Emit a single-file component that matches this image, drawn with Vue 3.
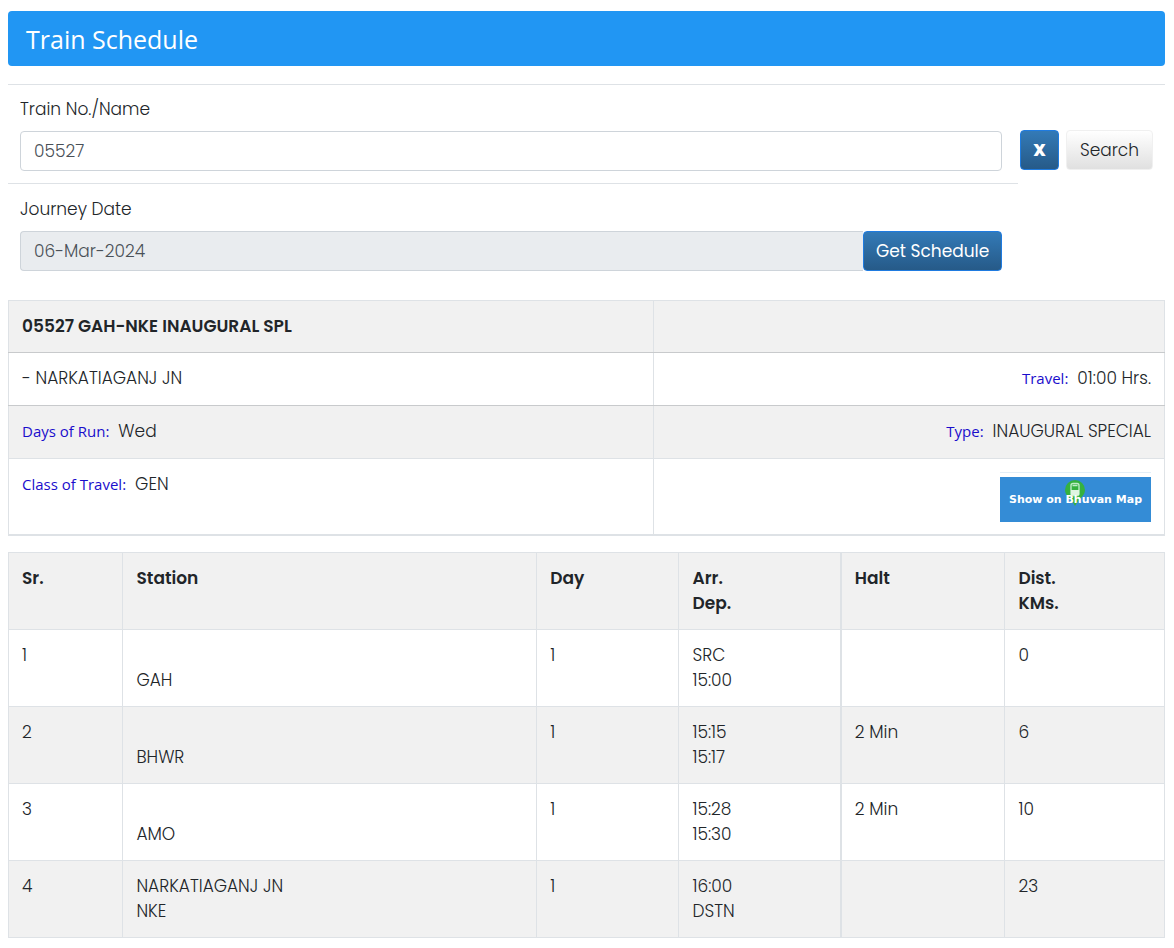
<script setup>
import { ref } from 'vue'

const trainNo = ref('05527')
const journeyDate = ref('06-Mar-2024')

const stops = [
  { sr: 1, name: '', code: 'GAH', day: 1, arr: 'SRC', dep: '15:00', halt: '', dist: 0 },
  { sr: 2, name: '', code: 'BHWR', day: 1, arr: '15:15', dep: '15:17', halt: '2 Min', dist: 6 },
  { sr: 3, name: '', code: 'AMO', day: 1, arr: '15:28', dep: '15:30', halt: '2 Min', dist: 10 },
  { sr: 4, name: 'NARKATIAGANJ JN', code: 'NKE', day: 1, arr: '16:00', dep: 'DSTN', halt: '', dist: 23 }
]
</script>

<template>
  <main class="page">
    <h1 class="banner">Train Schedule</h1>

    <form class="search" @submit.prevent>
      <div class="field">
        <label for="train">Train No./Name</label>
        <input id="train" v-model="trainNo" class="control" type="text" />
      </div>
      <div class="actions">
        <button type="button" class="btn primary clear" @click="trainNo = ''">X</button>
        <button type="button" class="btn plain">Search</button>
      </div>
      <div class="field journey">
        <label for="date">Journey Date</label>
        <div class="group">
          <input id="date" v-model="journeyDate" class="control" type="text" readonly />
          <button type="submit" class="btn primary">Get Schedule</button>
        </div>
      </div>
    </form>

    <table class="grid summary">
      <colgroup>
        <col class="s-left" />
        <col />
      </colgroup>
      <tbody>
        <tr class="head">
          <th>05527 GAH-NKE INAUGURAL SPL</th>
          <td></td>
        </tr>
        <tr class="route">
          <td>- NARKATIAGANJ JN</td>
          <td><span class="key">Travel:</span>01:00 Hrs.</td>
        </tr>
        <tr>
          <td><span class="key">Days of Run:</span>Wed</td>
          <td><span class="key">Type:</span>INAUGURAL SPECIAL</td>
        </tr>
        <tr class="last">
          <td><span class="key">Class of Travel:</span>GEN</td>
          <td>
            <button type="button" class="map">
              <svg class="pin" viewBox="0 0 22 28" width="22" height="28" aria-hidden="true">
                <path d="M11 1a10 10 0 0 1 10 10c0 6-6 8-10 16C7 19 1 17 1 11A10 10 0 0 1 11 1z" fill="#35b13f" />
                <rect x="7" y="4.500" width="8" height="12" rx="2" fill="none" stroke="#bdebc5" stroke-width="1.400" />
                <path d="M7 11h8v5H7z" fill="#dff5e2" />
                <path d="M8.500 6.500h5M8 18l-1 2M14 18l1 2" stroke="#bdebc5" stroke-width="1.300" />
              </svg>
              <span>Show on Bhuvan Map</span>
            </button>
          </td>
        </tr>
      </tbody>
    </table>

    <table class="grid stops">
      <colgroup>
        <col class="c-sr" />
        <col class="c-station" />
        <col class="c-day" />
        <col class="c-time" />
        <col class="c-halt" />
        <col />
      </colgroup>
      <thead>
        <tr>
          <th>Sr.</th>
          <th>Station</th>
          <th>Day</th>
          <th>Arr.<br />Dep.</th>
          <th>Halt</th>
          <th>Dist.<br />KMs.</th>
        </tr>
      </thead>
      <tbody>
        <tr v-for="s in stops" :key="s.sr">
          <td>{{ s.sr }}</td>
          <td>{{ s.name }}<br />{{ s.code }}</td>
          <td>{{ s.day }}</td>
          <td>{{ s.arr }}<br />{{ s.dep }}</td>
          <td>{{ s.halt }}</td>
          <td>{{ s.dist }}</td>
        </tr>
      </tbody>
    </table>
  </main>
</template>

<style>
body {
  background: #fff;
}
</style>

<style scoped>
* {
  box-sizing: border-box;
}
.page {
  padding: 11px 9px 11px 8px;
  font: 300 17px/25px Poppins, Inter, sans-serif;
  color: #212529;
}
.banner {
  margin: 0 0 18px;
  padding: 11px 18px 10px;
  border-radius: 4px;
  background: #2196f3;
  color: #fff;
  font: 400 25px/34px "Segoe UI", "Open Sans", sans-serif;
}
.search {
  display: grid;
  grid-template-columns: minmax(0, 1fr) auto;
  border-top: 1px solid #dee2e6;
  margin-bottom: 17px;
}
.field {
  padding: 12px 16px 12px 12px;
}
.journey {
  padding-top: 13px;
  border-top: 1px solid #dee2e6;
}
.field label {
  display: block;
  margin-bottom: 9px;
}
.control {
  display: block;
  width: 100%;
  height: 40px;
  padding: 0 13px;
  border: 1px solid #ced4da;
  border-radius: 4px;
  background: #fff;
  color: #495057;
  font: inherit;
}
.control[readonly] {
  background: #e9ecef;
}
.group {
  display: flex;
}
.group .control {
  flex: 1;
  min-width: 0;
  border-radius: 4px 0 0 4px;
  border-right: 0;
}
.actions {
  display: flex;
  align-items: flex-start;
  gap: 7px;
  padding: 45px 12px 0 2px;
}
.btn {
  height: 40px;
  padding: 0 12px;
  border-radius: 4px;
  font: 400 17px/24px Poppins, Inter, sans-serif;
  white-space: nowrap;
}
.primary {
  border: 1px solid #1f7be0;
  background: linear-gradient(#337ab7, #265a88);
  color: #fff;
}
.group .primary {
  width: 139px;
}
.clear {
  width: 39px;
  font-weight: 800;
}
.plain {
  width: 87px;
  border: 1px solid #f0f0f0;
  background: linear-gradient(#fff, #e0e0e0);
  color: #212529;
  font-weight: 300;
}
.grid {
  width: 100%;
  table-layout: fixed;
  border-collapse: collapse;
  border: 1px solid #dee2e6;
}
.grid th,
.grid td {
  padding: 13px;
  border: 1px solid #dee2e6;
  text-align: left;
  vertical-align: top;
}
.grid th {
  font-weight: 600;
}
.summary tr:nth-child(odd),
.stops thead tr,
.stops tbody tr:nth-child(even) {
  background: #f1f1f1;
}
.summary {
  margin-bottom: 16px;
}
.s-left {
  width: 55.8%;
}
.summary td:last-child {
  text-align: right;
}
.summary tr {
  height: 53px;
}
.summary .head {
  height: 52px;
}
.summary .head th,
.summary .head td {
  padding-bottom: 12px;
}
.summary .head th,
.summary .head td,
.summary .route td {
  border-bottom-color: #c8cacc;
}
.summary .last td {
  padding-bottom: 12px;
  border-bottom: 2px solid #dee2e6;
}
.key {
  margin-right: 9px;
  color: #1a0dcc;
  font: 400 15px/25px "Segoe UI", "Open Sans", sans-serif;
}
.map {
  position: relative;
  display: block;
  width: 151px;
  height: 50px;
  margin-left: auto;
  padding: 0;
  border: 0;
  background: linear-gradient(#e3eef7 1px, #fff 1px, #fff 5px, #348cd6 5px);
  color: #fff;
  font: 700 11px/16px Verdana, "DejaVu Sans", sans-serif;
  white-space: nowrap;
}
.map span {
  position: relative;
  display: block;
  padding-top: 5px;
}
.pin {
  position: absolute;
  left: 64px;
  top: 7px;
}
.c-sr {
  width: 9.9%;
}
.c-station {
  width: 35.8%;
}
.c-day {
  width: 12.3%;
}
.c-time {
  width: 14%;
}
.c-halt {
  width: 14.2%;
}
.stops th:nth-child(4),
.stops td:nth-child(4) {
  border-right-width: 2px;
}
</style>
